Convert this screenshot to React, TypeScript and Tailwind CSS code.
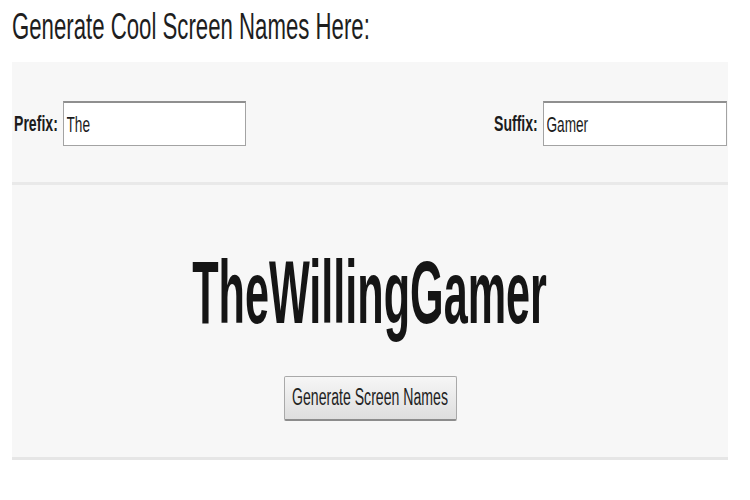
import { useState } from 'react';

const PREFIXES = ['The', 'Mr', 'Captain', 'Lord', 'Dr'];
const WORDS = ['Willing', 'Silent', 'Crazy', 'Lucky', 'Frozen', 'Mighty'];

interface FieldProps {
  id: string;
  label: string;
  value: string;
  onChange: (v: string) => void;
  width: string;
}

const Field = ({ id, label, value, onChange, width }: FieldProps) => (
  <div className="flex items-center">
    <label htmlFor={id} className="w-[49px] text-[22px] font-bold whitespace-nowrap text-[#1c1c1c]">
      <span className="inline-block origin-left scale-x-[0.64]">{label}</span>
    </label>
    <div className={`${width} h-[45px] bg-white border border-[#a3a3a3] border-t-2 border-t-[#8f8f8f] overflow-hidden flex items-center`}>
      <input
        id={id}
        value={value}
        onChange={(e) => onChange(e.target.value)}
        className="shrink-0 w-[290px] origin-left scale-x-[0.62] bg-transparent px-[4px] text-[22px] text-[#1c1c1c] outline-none"
      />
    </div>
  </div>
);

export default function App() {
  const [prefix, setPrefix] = useState('The');
  const [suffix, setSuffix] = useState('Gamer');
  const [middle, setMiddle] = useState('Willing');

  const generate = () => {
    const next = WORDS[Math.floor(Math.random() * WORDS.length)];
    setMiddle(next);
    if (!prefix) setPrefix(PREFIXES[0]);
  };

  return (
    <div className="w-[750px] h-[500px] bg-white overflow-hidden font-['Liberation_Sans',Arial,sans-serif] text-[#1c1c1c]">
      <div className="h-[62px] pl-[12px] pt-[8px]">
        <h1 className="inline-block origin-left scale-x-[0.6] whitespace-nowrap text-[37px] leading-[37px] font-normal text-[#1e1e1e]">
          Generate Cool Screen Names Here:
        </h1>
      </div>

      <div className="mx-[12px] w-[716px] bg-[#f7f7f7] border-b-[3px] border-[#e6e6e6]">
        <div className="h-[120px] flex items-center justify-between pl-[2px] pr-[1px] pt-[3px]">
          <Field id="prefix" label="Prefix:" value={prefix} onChange={setPrefix} width="w-[183px]" />
          <Field id="suffix" label="Suffix:" value={suffix} onChange={setSuffix} width="w-[184px]" />
        </div>

        <div className="h-[3px] bg-[#e9e9e9]" />

        <div className="h-[272px] flex flex-col items-center pt-[63px]">
          <div className="flex justify-center w-full">
            <span className="inline-block scale-x-[0.485] whitespace-nowrap text-[89px] leading-[89px] font-bold text-[#151515]">
              {prefix}{middle}{suffix}
            </span>
          </div>
          <button
            onClick={generate}
            className="mt-[39px] w-[173px] h-[45px] flex items-center justify-center border border-[#a9a9a9] border-b-2 border-b-[#8c8c8c] rounded-[2px] bg-gradient-to-b from-[#f6f6f6] to-[#dedede] text-[23.5px] text-[#222]"
          >
            <span className="inline-block scale-x-[0.6] whitespace-nowrap">Generate Screen Names</span>
          </button>
        </div>
      </div>
    </div>
  );
}
